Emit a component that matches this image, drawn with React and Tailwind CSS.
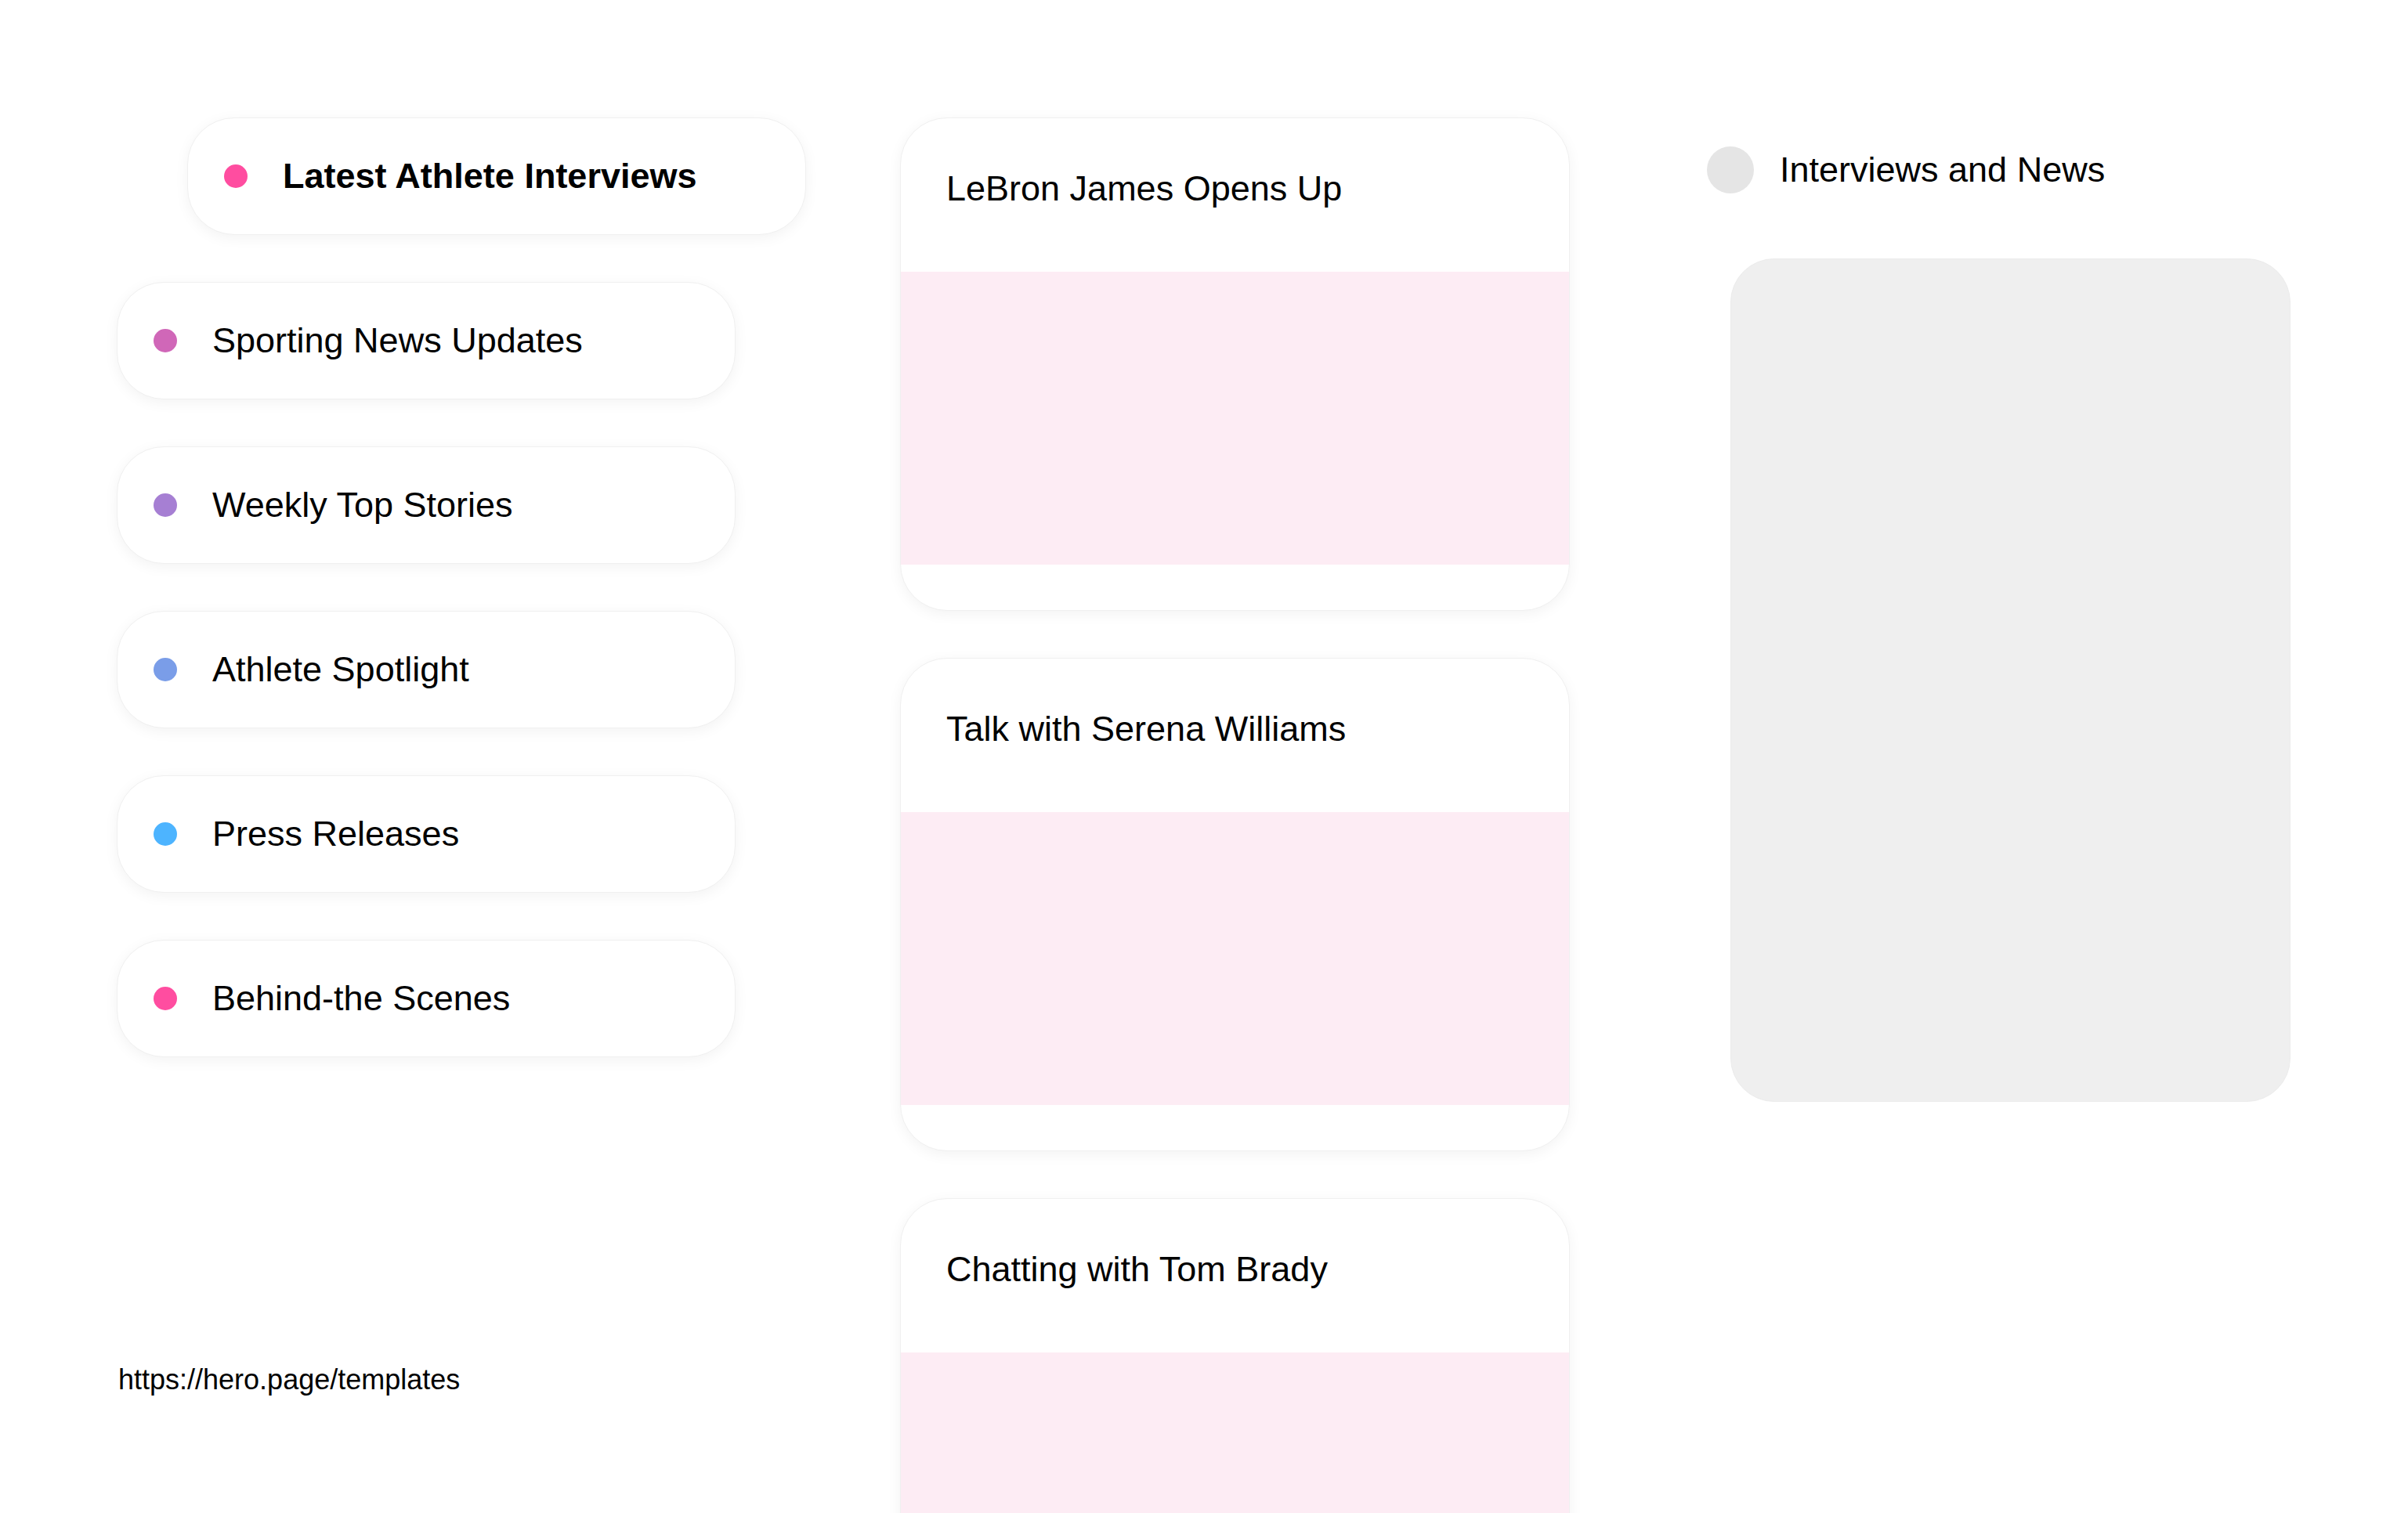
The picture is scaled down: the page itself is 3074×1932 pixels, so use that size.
import React from "react";

const topics = [
  { label: "Latest Athlete Interviews", dot: "bg-[#ff4da0]", active: true },
  { label: "Sporting News Updates", dot: "bg-[#d067b8]" },
  { label: "Weekly Top Stories", dot: "bg-[#a67fd3]" },
  { label: "Athlete Spotlight", dot: "bg-[#7a9de8]" },
  { label: "Press Releases", dot: "bg-[#4db4ff]" },
  { label: "Behind-the Scenes", dot: "bg-[#ff4da0]" },
];

const stories = ["LeBron James Opens Up", "Talk with Serena Williams", "Chatting with Tom Brady"];

export default function App() {
  return (
    <div className="min-h-screen bg-white flex items-start pt-[150px] pl-[149px] text-black font-['Liberation_Sans',Arial,sans-serif]">
      {/* Lista de temas */}
      <div className="w-[790px] shrink-0 flex flex-col">
        <div className="flex flex-col gap-[60px]">
          {topics.map((t) => (
            <div
              key={t.label}
              className={`h-[150px] w-[790px] flex items-center gap-[45px] pl-[46px] bg-white rounded-[60px] border border-[#f0f0f0] shadow-[0_4px_18px_rgba(0,0,0,0.05)] ${
                t.active ? "ml-[90px]" : ""
              }`}
            >
              <span className={`w-[30px] h-[30px] rounded-full shrink-0 ${t.dot}`}></span>
              <span className={`text-[45px] leading-[52px] ${t.active ? "font-bold" : ""}`}>{t.label}</span>
            </div>
          ))}
        </div>
        <p className="mt-[391px] text-[36px] leading-[42px] pl-[2px]">https://hero.page/templates</p>
      </div>

      {/* Tarjetas */}
      <div className="ml-[210px] w-[855px] shrink-0 flex flex-col gap-[60px]">
        {stories.map((s) => (
          <div
            key={s}
            className="h-[630px] bg-white rounded-[60px] overflow-hidden border border-[#f0f0f0] shadow-[0_4px_18px_rgba(0,0,0,0.05)] flex flex-col"
          >
            <div className="h-[196px] pt-[64px] pl-[58px] text-[45px] leading-[52px]">{s}</div>
            <div className="h-[374px] bg-[#fdecf4]"></div>
          </div>
        ))}
      </div>

      {/* Columna derecha */}
      <div className="ml-[175px] w-[745px] shrink-0 flex flex-col">
        <div className="mt-[37px] h-[60px] flex items-center gap-[33px]">
          <span className="w-[60px] h-[60px] rounded-full bg-[#e5e5e5] shrink-0"></span>
          <span className="text-[45px] leading-[52px]">Interviews and News</span>
        </div>
        <div className="mt-[83px] ml-[30px] w-[715px] h-[1077px] rounded-[56px] bg-[#efefef] border border-[#ececec]"></div>
      </div>
    </div>
  );
}
